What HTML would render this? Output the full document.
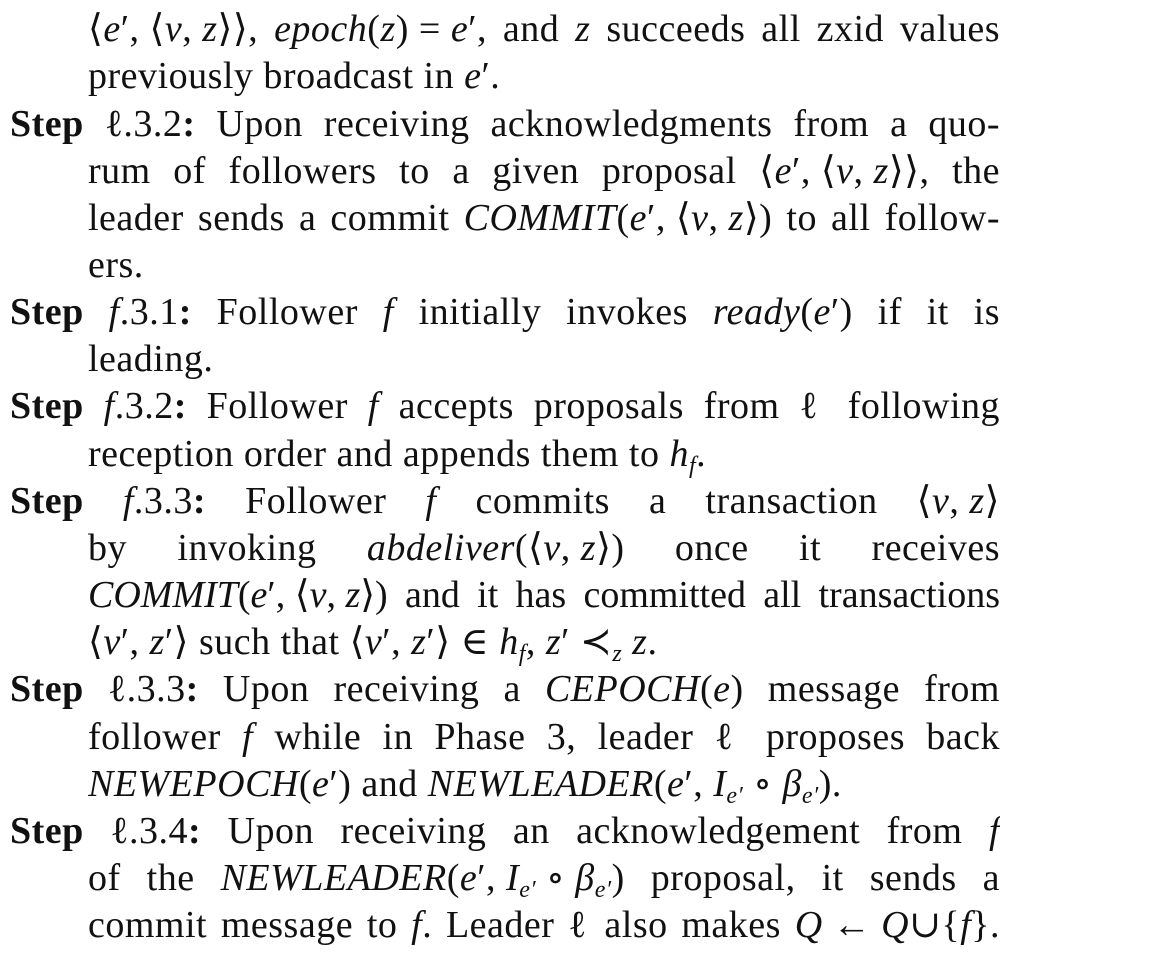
<!DOCTYPE html>
<html><head><meta charset="utf-8">
<style>
html,body{margin:0;padding:0;background:#fff;}
body{width:1150px;height:954px;position:relative;overflow:hidden;font-family:"Liberation Serif","DejaVu Serif",serif;font-size:38px;color:#111;letter-spacing:0.5px;}
.l{position:absolute;height:47px;line-height:47px;white-space:nowrap;overflow:hidden;}
.i{left:88px;width:912px;}
.s{left:10px;width:990px;}
.j{text-align:justify;text-align-last:justify;white-space:normal;}
b{font-weight:bold;}
i{font-style:italic;}
.m{display:inline-block;white-space:nowrap;}
sub{font-size:24px;line-height:0;vertical-align:-7px;}
</style></head><body>
<div class="l i j" style="top:6px"><span class="m">⟨<i>e</i>′, ⟨<i>v</i>, <i>z</i>⟩⟩,</span> <span class="m"><i>epoch</i>(<i>z</i>)&nbsp;=&nbsp;<i>e</i>′,</span> and <i>z</i> succeeds all zxid values</div>
<div class="l i" style="top:53px">previously broadcast in <i>e</i>′.</div>
<div class="l s j" style="top:101px"><b>Step</b> <span class="m">ℓ.3.2<b>:</b></span> Upon receiving acknowledgments from a quo-</div>
<div class="l i j" style="top:148px">rum of followers to a given proposal <span class="m">⟨<i>e</i>′, ⟨<i>v</i>, <i>z</i>⟩⟩,</span> the</div>
<div class="l i j" style="top:195px">leader sends a commit <span class="m"><i>COMMIT</i>(<i>e</i>′, ⟨<i>v</i>, <i>z</i>⟩)</span> to all follow-</div>
<div class="l i" style="top:242px">ers.</div>
<div class="l s j" style="top:289px"><b>Step</b> <span class="m"><i>f</i>.3.1<b>:</b></span> Follower <i>f</i> initially invokes <span class="m"><i>ready</i>(<i>e</i>′)</span> if it is</div>
<div class="l i" style="top:336px">leading.</div>
<div class="l s j" style="top:383px"><b>Step</b> <span class="m"><i>f</i>.3.2<b>:</b></span> Follower <i>f</i> accepts proposals from ℓ following</div>
<div class="l i" style="top:431px">reception order and appends them to <i>h<sub>f</sub></i>.</div>
<div class="l s j" style="top:478px"><b>Step</b> <span class="m"><i>f</i>.3.3<b>:</b></span> Follower <i>f</i> commits a transaction <span class="m">⟨<i>v</i>, <i>z</i>⟩</span></div>
<div class="l i j" style="top:525px">by invoking <span class="m"><i>abdeliver</i>(⟨<i>v</i>, <i>z</i>⟩)</span> once it receives</div>
<div class="l i j" style="top:572px;letter-spacing:0"><span class="m"><i>COMMIT</i>(<i>e</i>′, ⟨<i>v</i>, <i>z</i>⟩)</span> and it has committed all transactions</div>
<div class="l i" style="top:619px">⟨<i>v</i>′, <i>z</i>′⟩ such that ⟨<i>v</i>′, <i>z</i>′⟩ ∈ <i>h<sub>f</sub></i>, <i>z</i>′ ≺<sub><i>z</i></sub> <i>z</i>.</div>
<div class="l s j" style="top:666px"><b>Step</b> <span class="m">ℓ.3.3<b>:</b></span> Upon receiving a <span class="m"><i>CEPOCH</i>(<i>e</i>)</span> message from</div>
<div class="l i j" style="top:714px">follower <i>f</i> while in Phase 3, leader ℓ proposes back</div>
<div class="l i" style="top:761px"><i>NEWEPOCH</i>(<i>e</i>′) and <i>NEWLEADER</i>(<i>e</i>′, <i>I<sub>e′</sub></i> ∘ <i>β<sub>e′</sub></i>).</div>
<div class="l s j" style="top:808px"><b>Step</b> <span class="m">ℓ.3.4<b>:</b></span> Upon receiving an acknowledgement from <i>f</i></div>
<div class="l i j" style="top:855px">of the <span class="m"><i>NEWLEADER</i>(<i>e</i>′, <i>I<sub>e′</sub></i> ∘ <i>β<sub>e′</sub></i>)</span> proposal, it sends a</div>
<div class="l i j" style="top:902px">commit message to <i>f</i>. Leader ℓ also makes <span class="m"><i>Q</i> ← <i>Q</i>∪{<i>f</i>}.</span></div>
</body></html>
